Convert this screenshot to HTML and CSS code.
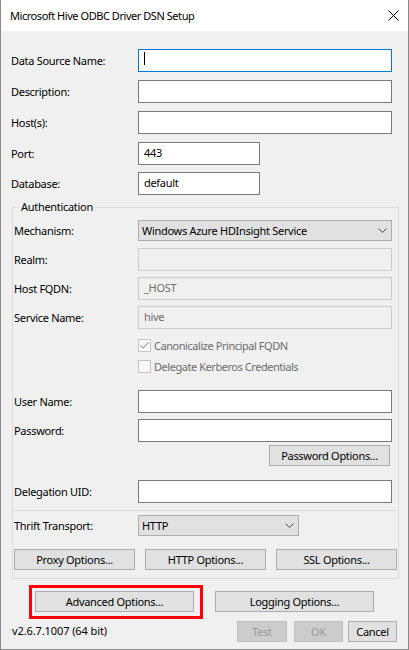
FILE: index.html
```html
<!DOCTYPE html>
<html>
<head>
<meta charset="utf-8">
<link rel="stylesheet" href="styles.css">
</head>
<body>
<div class="window">
  <div class="titlebar">
    <span class="title">Microsoft Hive ODBC Driver DSN Setup</span>
    <svg class="close" width="11" height="11" viewBox="0 0 11 11"><path d="M0.5 0.5 L10.5 10.5 M10.5 0.5 L0.5 10.5" stroke="#000" stroke-width="1"/></svg>
  </div>
  <div class="content">
    <div class="row"><span class="lbl">Data Source Name:</span><div class="edit focus"><span class="caret"></span></div></div>
    <div class="row mt8"><span class="lbl">Description:</span><div class="edit"></div></div>
    <div class="row mt8"><span class="lbl">Host(s):</span><div class="edit"></div></div>
    <div class="row mt8"><span class="lbl">Port:</span><div class="edit short">443</div></div>
    <div class="row mt7"><span class="lbl">Database:</span><div class="edit short">default</div></div>

    <div class="group g1">
      <span class="legend">Authentication</span>
      <div class="row srow mt5"><span class="lbl glbl">Mechanism:</span><div class="sel wide"><span>Windows Azure HDInsight Service</span><svg width="9" height="5" viewBox="0 0 9 5"><path d="M0.5 0.5 L4.5 4.5 L8.5 0.5" fill="none" stroke="#444"/></svg></div></div>
      <div class="row mt7"><span class="lbl glbl">Realm:</span><div class="edit dis"></div></div>
      <div class="row mt6"><span class="lbl glbl">Host FQDN:</span><div class="edit dis">_HOST</div></div>
      <div class="row mt6"><span class="lbl glbl">Service Name:</span><div class="edit dis">hive</div></div>
      <div class="crow mt9"><span class="cb"><svg width="11" height="11" viewBox="0 0 11 11"><path d="M1.5 5.5 L4 8 L9.5 2.5" fill="none" stroke="#a6a6a6" stroke-width="1.2"/></svg></span><span class="ctext">Canonicalize Principal FQDN</span></div>
      <div class="crow mt6"><span class="cb"></span><span class="ctext">Delegate Kerberos Credentials</span></div>
      <div class="row mt16"><span class="lbl glbl">User Name:</span><div class="edit"></div></div>
      <div class="row mt6"><span class="lbl glbl">Password:</span><div class="edit"></div></div>
      <div class="brow mt3"><div class="btn pwd">Password Options...</div></div>
      <div class="row mt14"><span class="lbl glbl">Delegation UID:</span><div class="edit"></div></div>
    </div>

    <div class="group g2">
      <div class="row srow"><span class="lbl glbl">Thrift Transport:</span><div class="sel thrift"><span>HTTP</span><svg width="9" height="5" viewBox="0 0 9 5"><path d="M0.5 0.5 L4.5 4.5 L8.5 0.5" fill="none" stroke="#444"/></svg></div></div>
      <div class="trio mt13">
        <div class="btn opt">Proxy Options...</div>
        <div class="btn opt http">HTTP Options...</div>
        <div class="btn opt ssl">SSL Options...</div>
      </div>
    </div>

    <div class="actions">
      <div class="highlight"><div class="btn wide-btn">Advanced Options...</div></div>
      <div class="btn wide-btn logging">Logging Options...</div>
    </div>

    <div class="footer">
      <span class="version">v2.6.7.1007 (64 bit)</span>
      <div class="btn dis test">Test</div>
      <div class="btn dis ok">OK</div>
      <div class="btn cancel">Cancel</div>
    </div>
  </div>
</div>
</body>
</html>
```

FILE: styles.css
```css
* { box-sizing: border-box; }

body {
  margin: 0;
  font-family: "Noto Sans", "Open Sans", sans-serif;
  font-size: 11px;
  letter-spacing: -0.3px;
  color: #000;
}

.window {
  width: 409px;
  height: 650px;
  border: 1px solid #8a8a8a;
  border-top: 0;
  background: #f0f0f0;
  display: flex;
  flex-direction: column;
}

.titlebar {
  height: 31px;
  flex: none;
  background: #fff;
  display: flex;
  align-items: center;
  justify-content: space-between;
  padding: 0 9px 0 9px;
}

.title {
  font-size: 11px;
  letter-spacing: -0.45px;
}

.content {
  padding: 18px 0 0 10px;
}

.row {
  display: flex;
  align-items: center;
  height: 23px;
}

.srow { height: 21px; }

.lbl { width: 127px; flex: none; margin-top: -1px; }
.glbl { width: 124px; }

.edit {
  width: 254px;
  height: 23px;
  background: #fff;
  border: 1px solid #7a7a7a;
  padding: 1px 5px;
  line-height: 17px;
}
.edit.short { width: 122px; }
.edit.focus { border-color: #0078d7; padding-top: 2px; }
.edit.dis {
  background: #f0f0f0;
  border-color: #cccccc;
  color: #6d6d6d;
}

.caret {
  display: block;
  width: 1px;
  height: 13px;
  background: #000;
}

.mt3 { margin-top: 3px; }
.mt5 { margin-top: 5px; }
.mt6 { margin-top: 6px; }
.mt7 { margin-top: 7px; }
.mt8 { margin-top: 8px; }
.mt9 { margin-top: 9px; }
.mt13 { margin-top: 13px; }
.mt14 { margin-top: 14px; }
.mt16 { margin-top: 16px; }

.group {
  width: 387px;
  margin-left: 1px;
  border: 1px solid #dcdcdc;
  padding-left: 1px;
}
.g1 {
  margin-top: 12px;
  padding-bottom: 7px;
}
.g2 {
  border-top: 0;
  padding-top: 4px;
  padding-bottom: 8px;
}

.legend {
  display: block;
  width: max-content;
  margin: -9px 0 0 5px;
  padding: 0 2px;
  line-height: 16px;
  background: #f0f0f0;
}

.sel {
  height: 21px;
  background: #e1e1e1;
  border: 1px solid #adadad;
  padding: 0 4px 0 3px;
  display: flex;
  align-items: center;
  justify-content: space-between;
}
.sel.wide { width: 254px; }
.sel.thrift { width: 161px; }

.crow {
  display: flex;
  align-items: center;
  height: 15px;
  padding-left: 124px;
}
.cb {
  width: 13px;
  height: 13px;
  border: 1px solid #c4c4c4;
  background: #f8f8f8;
  display: flex;
  align-items: center;
  justify-content: center;
}
.ctext {
  margin-left: 3px;
  color: #6d6d6d;
  letter-spacing: -0.45px;
  margin-top: -1px;
}

.brow {
  display: flex;
  padding-left: 255px;
}

.btn {
  height: 21px;
  background: #e1e1e1;
  border: 1px solid #adadad;
  display: flex;
  align-items: center;
  justify-content: center;
  flex: none;
}
.btn.dis {
  background: #cccccc;
  border-color: #bfbfbf;
  color: #9a9a9a;
}
.pwd { width: 121px; }

.trio { display: flex; }
.opt { width: 121px; }
.http { margin-left: 10px; }
.ssl { margin-left: 10px; }

.actions {
  display: flex;
  align-items: flex-start;
  margin-top: 6px;
  padding-left: 18px;
}
.highlight {
  width: 174px;
  height: 34px;
  border: 3px solid #ff0000;
  padding: 3px 0 0 3px;
}
.wide-btn { width: 159px; }
.logging {
  margin-left: 12px;
  margin-top: 6px;
}

.footer {
  display: flex;
  align-items: center;
  height: 21px;
  margin-top: 2px;
  padding-right: 11px;
  padding-left: 1px;
}
.version { margin-right: auto; margin-top: -3px; letter-spacing: -0.1px; }
.test { width: 50px; }
.ok { width: 49px; margin-left: 7px; }
.cancel { width: 49px; margin-left: 5px; }
```
